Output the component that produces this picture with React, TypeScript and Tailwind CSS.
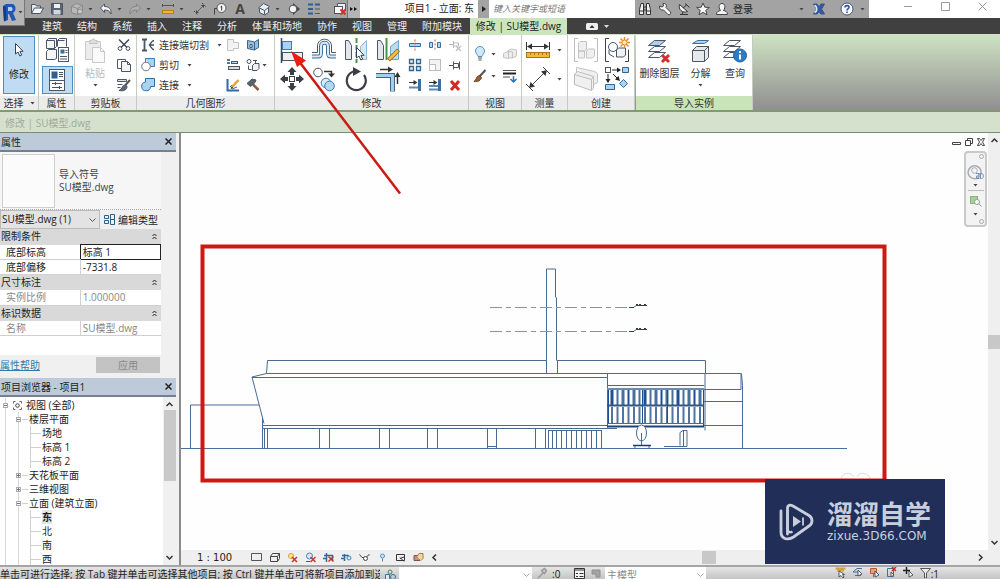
import type { ReactNode } from "react";

type IconProps = {
  w?: number;
  h?: number;
  children: ReactNode;
};

function Icon({ w = 16, h = 16, children }: IconProps) {
  return (
    <svg
      width={w}
      height={h}
      viewBox={`0 0 ${w} ${h}`}
      fill="none"
      stroke="#4b5563"
      className="block shrink-0"
      aria-hidden="true"
    >
      {children}
    </svg>
  );
}

function Caret() {
  return (
    <svg width="5" height="3" viewBox="0 0 5 3" className="block shrink-0" aria-hidden="true">
      <path d="M.5 0h4l-2 2.500z" fill="#444" />
    </svg>
  );
}

/* ---------- Quick access icons ---------- */

const OpenIcon = () => (
  <Icon w={14} h={14}>
    <path d="M1.500 11.500v-9h4l1 1.500h4v2" fill="#e8e8e8" />
    <path d="M1.500 11.500l3-5.500h9l-3 5.500z" fill="#f5f5f5" />
  </Icon>
);

const SaveIcon = () => (
  <Icon w={14} h={14}>
    <path d="M1.500 1.500h11v11h-10l-1-1z" fill="#5b6470" />
    <rect x="4" y="2" width="6" height="4" fill="#f0f0f0" stroke="none" />
    <rect x="3.500" y="8" width="7" height="4.500" fill="#cfd8e2" stroke="none" />
  </Icon>
);

const SyncIcon = () => (
  <Icon w={14} h={14}>
    <path d="M1.500 4.500l5-3 6 2v6l-5 3-6-2z" fill="#b9b9b9" stroke="#8a8a8a" />
    <path d="M1.500 4.500l6 2 5-3M7.500 6.500v6" stroke="#8a8a8a" />
    <circle cx="10" cy="9.500" r="2.500" fill="#c8c8c8" stroke="#8a8a8a" />
  </Icon>
);

function UndoIcon({ redo = false }: { redo?: boolean }) {
  return (
    <Icon w={14} h={14}>
      <path
        d={redo ? "M12.500 6l-4-4v2.500C4 4.500 1.500 7 2 12c1.500-3 3-4 6.500-4v2.500z" : "M1.500 6l4-4v2.500C10 4.500 12.500 7 12 12c-1.500-3-3-4-6.500-4v2.500z"}
        fill={redo ? "#aeaeae" : "#f4f4f4"}
        stroke={redo ? "#858585" : "#4b5563"}
      />
    </Icon>
  );
}

const RulerIcon = () => (
  <Icon w={14} h={14}>
    <path d="M2 3.500h10M1.500 2v3M12.500 2v3" stroke="#555" />
    <rect x="1.500" y="8.500" width="11" height="3" fill="#f2b632" stroke="#b77d10" />
  </Icon>
);

const DimIcon = () => (
  <Icon w={14} h={14}>
    <path d="M3 11l8-8M1 9l4 4M9 1l4 4" stroke="#444" strokeDasharray="2 1" />
    <path d="M3 11v-3l3 3zM11 3v3l-3-3z" fill="#444" stroke="none" />
  </Icon>
);

const TagIcon = () => (
  <Icon w={14} h={14}>
    <path d="M1.500 12.500v-6h4" stroke="#444" />
    <circle cx="8.500" cy="6" r="4.500" fill="#f5f5f5" stroke="#555" />
    <path d="M7.500 5l1.200-1v4.500" stroke="#333" />
  </Icon>
);

const CubeIcon = () => (
  <Icon w={14} h={14}>
    <path d="M1.500 6l5-4.500 6 3-1 1v5l-4 2.500-5-2.500v-4z" fill="#e4ecf4" />
    <path d="M2.500 6l5 2.500 4-3M7.500 8.500v4" />
  </Icon>
);

const SectionIcon = () => (
  <Icon w={14} h={14}>
    <path d="M6 1l7 6-7 6z" fill="#444" stroke="none" />
    <circle cx="6" cy="7" r="3.800" fill="#f2f2f2" />
  </Icon>
);

const ThinLinesIcon = () => (
  <Icon w={14} h={14}>
    <path d="M1 2.500h5M8 2.500h5M1 7h5M1 11.500h5" stroke="#2f5f96" strokeWidth="2" />
    <path d="M8 7h5M8 11.500h5" stroke="#555" />
  </Icon>
);

const CloseHiddenIcon = () => (
  <Icon w={14} h={14}>
    <path d="M4.500 4v-2.500h8v7h-2" fill="#eee" />
    <rect x="1.500" y="4.500" width="8" height="7" fill="#f8f8f8" />
    <path d="M7.500 7.500l5 5M12.500 7.500l-5 5" stroke="#d2312b" strokeWidth="2" />
  </Icon>
);

const BinocularsIcon = () => (
  <Icon w={14} h={14}>
    <path d="M1.500 12.500v-5l1.500-6h2.500v11zM12.500 12.500v-5l-1.500-6H8.500v11z" fill="#f1f1f1" stroke="#333" />
    <path d="M5.500 5h3M5.500 8h3M1.500 9h4M8.500 9h4" stroke="#333" />
  </Icon>
);

const WrenchIcon = () => (
  <Icon w={14} h={14}>
    <path d="M1.500 4L4 5l1.500-1L5 1.500C8 1 9 3.500 8 5.500l4.500 4.500c1 2-1 3.500-2.500 2.500L5.500 8C3 8.500 1 7 1.500 4z" fill="#f3f3f3" stroke="#444" />
  </Icon>
);

const DishIcon = () => (
  <Icon w={14} h={14}>
    <path d="M2.500 2.500c-1.500 5 3 9 8 7z" fill="#f3f3f3" stroke="#333" />
    <path d="M6 6l4-3.500M3 12.500h8M6 10l-1 2.500M8 1.500l4.500 4" stroke="#333" />
  </Icon>
);

const StarIcon = () => (
  <Icon w={14} h={14}>
    <path d="M7 1l1.800 4.200 4.500.3-3.500 2.900 1.200 4.400L7 10.400l-4 2.400 1.200-4.400L.7 5.500l4.500-.3z" fill="#f6f6f6" stroke="#444" />
  </Icon>
);

const PersonIcon = () => (
  <Icon w={14} h={14}>
    <path d="M1.500 12.500c0-3 2-3.500 4-4C3 5 4 1.500 7 1.500s4 3.500 1.500 7c2 .5 4 1 4 4z" fill="#f3f3f3" stroke="#444" />
  </Icon>
);

const ExchangeIcon = () => (
  <Icon w={14} h={14}>
    <path d="M1.500 2h3.500l2 3 2-3h3.500L9.500 7l3 5H9L7 9.500 5 12H1.500l3-5z" fill="#2f5aa8" stroke="#3a5286" />
    <path d="M2.500 3.500c3 1 3 6 0 7" stroke="#dfe8f8" strokeWidth="1.500" />
  </Icon>
);

const HelpIcon = () => (
  <Icon w={14} h={14}>
    <circle cx="7" cy="7" r="6" fill="#f5f8fd" stroke="#46597a" />
    <path d="M5 5.500C5 3 9 3 9 5.300 9 6.800 7 6.800 7 8.500M7 9.500v1.500" stroke="#2455a4" strokeWidth="1.600" />
  </Icon>
);

/* ---------- Ribbon icons ---------- */

function Cursor({ x, y }: { x: number; y: number }) {
  return (
    <path
      transform={`translate(${x} ${y})`}
      d="M.5.5v10.500l2.500-2 1.800 4 1.900-.9-1.800-3.800h3.200z"
      fill="#fff"
      stroke="#374151"
    />
  );
}

const ModifyIcon = () => (
  <Icon w={16} h={18}>
    <Cursor x={4} y={2} />
  </Icon>
);

const TypePropsIcon = () => (
  <Icon w={26} h={26}>
    <path d="M2.500 3.500l2-2h8v8l-2 2h-8zM13.500 3.500l2-2h7v8M2.500 14.500l2-2h8v9l-2 1h-8zM2.500 3.500h8v8M13.500 9.500v-6h7" fill="#f4f5f6" />
    <rect x="14.500" y="10.500" width="10" height="14" fill="#fff" />
    <rect x="16.500" y="12.500" width="4" height="4" fill="#2f6da8" stroke="none" />
    <path d="M16 19.500h7M16 22h7M21.500 13.500h2M21.500 15.500h2" />
  </Icon>
);

const PropsIcon = () => (
  <Icon w={18} h={24}>
    <rect x="1.500" y="1.500" width="15" height="21" fill="#fff" />
    <rect x="3.500" y="3.500" width="6" height="7" fill="#2f5f8f" stroke="none" />
    <path d="M11 4.500h4M11 6.500h4M11 8.500h4M1.500 12.500h15M4 15.500h10M4 19.500h10M7.500 14v3M11.500 18v3" />
  </Icon>
);

const PasteIcon = () => (
  <Icon w={22} h={26}>
    <path d="M1.500 3.500h15v18h-15z" fill="#ececec" stroke="#c9c9c9" />
    <path d="M5.500 5.500v-3h2l1-1.500h1.500l1 1.500h2v3z" fill="#ddd" stroke="#c4c4c4" />
    <path d="M8.500 9.500h8l4 4v11h-12z" fill="#fafafa" stroke="#c9c9c9" />
    <path d="M16.500 9.500v4h4" stroke="#c9c9c9" />
  </Icon>
);

const CutIcon = () => (
  <Icon w={14} h={14}>
    <path d="M2 1.500l8 8M12 1.500l-8 8" stroke="#3f4650" strokeWidth="1.500" />
    <circle cx="3" cy="10.500" r="1.900" />
    <circle cx="11" cy="10.500" r="1.900" />
  </Icon>
);

const CopyIcon = () => (
  <Icon w={14} h={14}>
    <path d="M.5 1.500h8v9h-8z" fill="#fff" />
    <path d="M4.500 3.500h6l3 3v7h-9z" fill="#f3f4f5" />
    <path d="M10.500 3.500v3h3" />
  </Icon>
);

const MatchIcon = () => (
  <Icon w={14} h={14}>
    <path d="M.5 1.500h9v2h-9zM.5 6.500h5M.5 9.500h3" fill="#dfe5ea" />
    <path d="M13 2L8 7.500" stroke="#555" strokeWidth="2" />
    <path d="M8.500 7c-4 0-2.500 4-6.500 5.500 4.500 1 8-.5 8-4z" fill="#5d6673" />
  </Icon>
);

const CopeIcon = () => (
  <Icon w={14} h={14}>
    <path d="M1 1.500h5M1 12.500h5M3.500 1.500v11" strokeWidth="1.800" />
    <path d="M13 2.500c-2 0-2.500 2-4.500 4.500 2 2.500 2.500 4.500 4.500 4.500M8.500 7H13" stroke="#3f4d5c" strokeWidth="1.300" />
  </Icon>
);

const CutGeomIcon = () => (
  <Icon w={14} h={14}>
    <path d="M4.500.5h9v8h-4" fill="#a9d3f1" stroke="#3b7db4" />
    <circle cx="5" cy="8.500" r="4.300" fill="#fff" stroke="#6b7280" />
    <path d="M4.500 4V.5" stroke="#3b7db4" />
  </Icon>
);

const JoinIcon = () => (
  <Icon w={14} h={14}>
    <path d="M4.500.5h9v8h-4a4.400 4.400 0 1 1-5-4.500z" fill="#a9d3f1" stroke="#2f6f9f" />
  </Icon>
);

const CutProfileIcon = () => (
  <Icon w={14} h={14}>
    <path d="M1.500 1.500h6v3h5v6h-5v2h-6z" fill="#f3f3f3" stroke="#c2c2c2" />
  </Icon>
);

const BeamIcon = () => (
  <Icon w={14} h={14}>
    <path d="M1 2h3M1 5h3" stroke="#3b7db4" strokeWidth="2" />
    <rect x="5.500" y="3.500" width="6" height="2" fill="#b9d9ef" />
    <rect x="2.500" y="8.500" width="11" height="3" fill="#d5dade" />
  </Icon>
);

const PencilIcon = () => (
  <Icon w={14} h={14}>
    <path d="M1.500 1v11.500H13" stroke="#2f6da8" strokeWidth="2" />
    <path d="M4 9l2-2M6 11l5-2" stroke="#2f6da8" />
    <path d="M6 9l6.500-7" stroke="#e3a52a" strokeWidth="2.500" />
    <path d="M5 10.500l1.500-1.500" stroke="#333" strokeWidth="1.500" />
  </Icon>
);

const WallFaceIcon = () => (
  <Icon w={14} h={14}>
    <path d="M1.500 2.500l7 1.500v8l-7-1.500zM8.500 4l4-2.500v8L8.500 12z" fill="#8fc2e8" stroke="#41617f" />
    <path d="M4 6.500h2v3H4z" fill="#fff" />
  </Icon>
);

const SplitFaceIcon = () => (
  <Icon w={14} h={14}>
    <circle cx="3" cy="3.500" r="2" />
    <path d="M7 2.500h4M2.500 7.500v4h3M9.500 2.500v2.500" />
    <path d="M6.500 7.500l2-2h4.500v5l-2 2h-4.500z" fill="#eef1f3" />
  </Icon>
);

const HammerIcon = () => (
  <Icon w={14} h={14}>
    <path d="M7 6.500l5.500 5.500" stroke="#8d5a3a" strokeWidth="2.500" />
    <path d="M1 5.500l5-4.500 4 1-1 2.500L4.500 8.500z" fill="#59616c" />
  </Icon>
);

const AlignIcon = () => (
  <Icon w={26} h={26}>
    <path d="M2.500 1v25" stroke="#2f4c6a" strokeWidth="1.500" />
    <rect x="3.500" y="4.500" width="9" height="8" fill="#a9d3f1" stroke="#3b7db4" />
    <rect x="3.500" y="15.500" width="20" height="8" fill="#eceef0" />
  </Icon>
);

const OffsetIcon = () => (
  <Icon w={26} h={26}>
    <path
      d="M1 19.500h6.500c2.500 0 2.500-1.500 2.500-4V9c0-4.500 7-4.500 7 0v6.500c0 2.500 0 4 2.500 4H25"
      stroke="#3f6f9a"
      strokeWidth="4"
    />
    <path
      d="M1 19.500h6.500c2.500 0 2.500-1.500 2.500-4V9c0-4.500 7-4.500 7 0v6.500c0 2.500 0 4 2.500 4H25"
      stroke="#d6eaf8"
      strokeWidth="2"
    />
    <path d="M1 15.500h5.500V9c0-9 14-9 14 0v6.500H25" stroke="#4b5563" />
  </Icon>
);

const MirrorPickIcon = () => (
  <Icon w={26} h={26}>
    <path d="M2.500 3.500l3 0 3 5v14h-6z" fill="#e4e7ea" />
    <path d="M13.500 1v25" stroke="#46954a" strokeWidth="2" strokeDasharray="5 2" />
    <path d="M23.500 3.500l-6 6v13h6z" fill="#d4e8f5" stroke="#8db7d4" />
    <Cursor x={13} y={10} />
  </Icon>
);

const MirrorDrawIcon = () => (
  <Icon w={26} h={26}>
    <path d="M2.500 3.500l3 0 3 5v14h-6z" fill="#e4e7ea" />
    <path d="M11.500 1v22" stroke="#46954a" strokeWidth="2" />
    <path d="M23.500 3.500l-8 6v13h8z" fill="#b9dbf2" stroke="#6ca5cf" />
    <path d="M13.500 23l10-10" stroke="#8b6516" strokeWidth="4" />
    <path d="M14 22.500l9-9" stroke="#f4bf3c" strokeWidth="2.500" />
  </Icon>
);

const MoveIcon = () => (
  <Icon w={26} h={26}>
    <rect x="10.500" y="10.500" width="5" height="5" stroke="#3a3f46" />
    <path
      d="M13 1l4.500 5H15v3h-4V6H8.500zM13 25l-4.500-5H11v-3h4v3h2.500zM1 13l5-4.500V11h3v4H6v2.500zM25 13l-5 4.500V15h-3v-4h3V8.500z"
      fill="#3a3f46"
      stroke="none"
    />
  </Icon>
);

const CopyElementIcon = () => (
  <Icon w={26} h={26}>
    <circle cx="7" cy="6.500" r="4.300" fill="#fff" />
    <path d="M13 5.500h7.500v3" stroke="#333" strokeWidth="1.500" />
    <path d="M17 7.500h7l-3.500 4z" fill="#333" stroke="none" />
    <circle cx="15" cy="17" r="4.800" fill="#d8ebf8" stroke="#3b7db4" />
    <circle cx="18.500" cy="20" r="4.800" fill="#b3d7f1" stroke="#3b7db4" />
  </Icon>
);

const RotateIcon = () => (
  <Icon w={26} h={26}>
    <path d="M15 5.200A9.500 9.500 0 1 0 21 9" stroke="#3a3f46" strokeWidth="2.200" />
    <path d="M10 1l8 4.500-8 4.500z" fill="#3a3f46" stroke="none" />
  </Icon>
);

const TrimIcon = () => (
  <Icon w={26} h={26}>
    <path d="M5 3.500h9M22.500 18v-8" stroke="#333" strokeWidth="1.500" />
    <path d="M13 .5l5 3-5 3zM19.500 11l3-5 3 5z" fill="#333" stroke="none" />
    <path d="M1 9.500h16.500v16" stroke="#3f6486" strokeWidth="5" />
    <path d="M1 9.500h16.500v16" stroke="#a5cfee" strokeWidth="3" />
  </Icon>
);

function SplitIcon({ gap = false }: { gap?: boolean }) {
  return (
    <Icon w={14} h={14}>
      <path
        d={gap ? "M1.500 4.500h3v5h-3zM9.500 4.500h3v5h-3z" : "M1.500 5.500h11v3h-11z"}
        fill="#b3d7f1"
        stroke="#3b6f9c"
      />
      <path d="M7 1.500v11" stroke="#d35b50" strokeDasharray={gap ? "2 2" : "2 1"} />
    </Icon>
  );
}

const UnpinIcon = () => (
  <Icon w={14} h={14}>
    <path d="M1 6.500h4M5.500 3v7M5.500 5h5v3h-5" stroke="#bbb" />
    <path d="M8 8l5 5M13 8l-5 5" stroke="#c3c3c3" strokeWidth="1.500" />
  </Icon>
);

const ArrayIcon = () => (
  <Icon w={14} h={14}>
    <path d="M1.500 1.500h4v4h-4zM8.500 1.500h4v4h-4zM1.500 8.500h4v4h-4zM8.500 8.500h4v4h-4z" fill="#d9ecf9" stroke="#2f6591" strokeWidth="1.300" />
  </Icon>
);

const ScaleIcon = () => (
  <Icon w={14} h={14}>
    <rect x="1.500" y="1.500" width="11" height="11" fill="#f3f3f3" stroke="#bcbcbc" />
    <rect x="1.500" y="6.500" width="6" height="6" fill="#fff" stroke="#bcbcbc" />
  </Icon>
);

const PinIcon = () => (
  <Icon w={14} h={14}>
    <path d="M1 7.500h4M5.500 3.500v8M5.500 5.500h5v4h-5M11.500 3.500v8" />
  </Icon>
);

function TrimSingleIcon({ multi = false }: { multi?: boolean }) {
  return (
    <Icon w={14} h={14}>
      <path d="M11.500 1v12" stroke="#3b6f9c" strokeWidth="3" />
      <path d={multi ? "M1 8h9M1 11.500h9" : "M1 9.500h9"} stroke="#5c8cb5" strokeWidth="2" />
      <path d="M1 4.500h6" stroke="#333" />
      <path d="M5.500 2l4 2.500-4 2.500z" fill="#333" stroke="none" />
    </Icon>
  );
}

const DeleteIcon = () => (
  <Icon w={14} h={14}>
    <path d="M3 3l8 9M11 3l-8 9" stroke="#cf2a22" strokeWidth="3" />
  </Icon>
);

const BulbIcon = () => (
  <Icon w={14} h={16}>
    <path d="M5 10.500C5 8.500 2.500 8 2.500 5a4.500 4.500 0 0 1 9 0c0 3-2.500 3.500-2.500 5.500z" fill="#cfe8fa" stroke="#5d92bb" />
    <path d="M5 12h4M5.500 14h3" />
  </Icon>
);

const HideBoxIcon = () => (
  <Icon w={16} h={16}>
    <path d="M1.500 7.500l5-2v7l-5-1zM5.500 5l4-2 5 1v6l-4 2h-4M5.500 5l5 1v6" fill="#ededed" stroke="#c3c3c3" />
  </Icon>
);

const BrushIcon = () => (
  <Icon w={14} h={16}>
    <path d="M12.500 2L6.500 8.500" stroke="#50545a" strokeWidth="2" />
    <path d="M6.500 7.500c-4 1-2.500 4-5.500 6 4 .5 7-1 7.500-4z" fill="#9a5f33" stroke="#6d3f1d" />
  </Icon>
);

const LineWorkIcon = () => (
  <Icon w={16} h={16}>
    <path d="M1 2.500h13M1 9h7" stroke="#555" />
    <path d="M1 5.500h13" stroke="#222" strokeWidth="2" />
    <path d="M11.500 8v6M8.500 11l3 3 3-3" stroke="#2c72b0" strokeWidth="1.500" />
  </Icon>
);

const MeasureIcon = () => (
  <Icon w={26} h={26}>
    <path d="M1.500 5v8M24.500 5v8M3 9.500h20" stroke="#333" />
    <path d="M2 9.500l5-3v6zM24 9.500l-5-3v6z" fill="#333" stroke="none" />
    <rect x="1.500" y="15.500" width="23" height="5" fill="#f0b93a" stroke="#a8771a" />
    <path d="M5.500 16v2M9.500 16v2M13.500 16v2M17.500 16v2M21.500 16v2" stroke="#a8771a" />
  </Icon>
);

const AlignedDimIcon = () => (
  <Icon w={26} h={26}>
    <path d="M4 22L22 4M1 18l7 7M18 1l7 7" stroke="#444" />
    <path d="M4 22l1.500-6 4.500 4.500zM22 4l-1.500 6L16 5.500z" fill="#333" stroke="none" />
  </Icon>
);

const AssemblyIcon = () => (
  <Icon w={26} h={26}>
    <path d="M5 1.500H1.500v23H5M21 1.500h3.500v23H21" stroke="#bdbdbd" />
    <path d="M5.500 6l2-1.500h6v8l-2 1.500h-6zM5.500 14h6v7h-6zM13.500 14l2-2h6v7l-2 2h-6z" fill="#efefef" stroke="#c3c3c3" />
  </Icon>
);

const CreateGroupIcon = () => (
  <Icon w={26} h={26}>
    <path d="M5 1.500H1.500v23H5M21 24.500h3.500v-12" stroke="#444" />
    <circle cx="9" cy="10" r="4.500" fill="#fff" />
    <path d="M12.500 13l2-2h7v7l-2 2h-7z" fill="#eef2f5" />
    <path d="M5 13v4l5 3" />
    <path d="M20.500 0v11M15 5.500h11M16.500 1.500l8 8M24.500 1.500l-8 8" stroke="#e58b2a" strokeWidth="1.500" />
    <circle cx="20.500" cy="5.500" r="2.500" fill="#fff1cf" stroke="#e58b2a" />
  </Icon>
);

const PartsIcon = () => (
  <Icon w={26} h={26}>
    <path d="M3.500 1.500l18 4 3 2v9l-4 2M3.500 1.500v5" fill="#efefef" stroke="#c3c3c3" />
    <path d="M1.500 8.500l3-3 16 5v12l-2 2-17-6z" fill="#f0f0f0" stroke="#bdbdbd" />
    <path d="M1.500 8.500l17 5v11M18.500 13.500l2-3" stroke="#bdbdbd" />
  </Icon>
);

const SimilarIcon = () => (
  <Icon w={26} h={26}>
    <rect x="1.500" y="1.500" width="5" height="5" />
    <path d="M8 4h8M4 8v8M9 8l6 6" stroke="#222" />
    <path d="M13 1.500l4 2.500-4 2.500zM1.500 13h5L4 17zM16 15l-5-1.500 3.500-3.500z" fill="#222" stroke="none" />
    <path d="M18.500 1.500h6v5h-6zM1.500 18.500h9v5h-9zM19.500 13.500l4 4-4 4-4-4z" fill="#a9d3f1" stroke="#2f6591" />
  </Icon>
);

function LayerStack({ top }: { top: string }) {
  return (
    <>
      <path d="M1.500 19.500l6-5h11l-6 5z" fill="#fff" />
      <path d="M1.500 13.500l6-5h11l-6 5z" fill="#fff" />
      <path d="M1.500 7.500l6-5h11l-6 5z" fill={top} />
    </>
  );
}

const DeleteLayersIcon = () => (
  <Icon w={26} h={26}>
    <LayerStack top="#a9d3f1" />
    <path d="M15 17l7 7M22 17l-7 7" stroke="#d2312b" strokeWidth="3" />
  </Icon>
);

const ExplodeIcon = () => (
  <Icon w={22} h={26}>
    <path d="M2.500 5.500l5-3h11l-4 3z" fill="#a9d3f1" stroke="#3b6f9c" />
    <path d="M2.500 12.500l4-4h12v11l-4 4h-12z" fill="#e6e9ec" />
    <path d="M2.500 12.500h12v11M14.500 12.500l4-4" />
  </Icon>
);

const QueryIcon = () => (
  <Icon w={26} h={26}>
    <LayerStack top="#fff" />
    <circle cx="18" cy="17.500" r="6.500" fill="#2c7bc4" stroke="#1f5f9c" />
    <path d="M18 16.500v5M18 13v2" stroke="#fff" strokeWidth="2" />
  </Icon>
);

/* ---------- Title bar ---------- */

type ToolButtonProps = {
  label: string;
  className?: string;
  children: ReactNode;
};

function ToolButton({ label, className = "", children }: ToolButtonProps) {
  return (
    <button
      type="button"
      aria-label={label}
      className={`flex shrink-0 items-center justify-center ${className}`}
    >
      {children}
    </button>
  );
}

function TitleBar() {
  return (
    <header className="flex h-[18px] shrink-0 items-stretch bg-white">
      <div className="flex w-[348px] shrink-0 items-center border-r border-[#777] bg-[#a3a3a3] pl-[27px]">
        <ToolButton label="打开" className="w-5"><OpenIcon /></ToolButton>
        <ToolButton label="保存" className="w-5"><SaveIcon /></ToolButton>
        <ToolButton label="同步" className="w-[29px] gap-1"><SyncIcon /><Caret /></ToolButton>
        <ToolButton label="放弃" className="w-[29px] gap-1"><UndoIcon /><Caret /></ToolButton>
        <ToolButton label="重做" className="w-[29px] gap-1"><UndoIcon redo /><Caret /></ToolButton>
        <ToolButton label="测量" className="w-9 gap-1"><RulerIcon /><Caret /></ToolButton>
        <ToolButton label="对齐尺寸标注" className="w-5"><DimIcon /></ToolButton>
        <ToolButton label="按类别标记" className="w-5"><TagIcon /></ToolButton>
        <button type="button" className="w-5 shrink-0 text-[14px] leading-[18px] font-bold text-[#444]">A</button>
        <ToolButton label="三维视图" className="w-9 gap-1"><CubeIcon /><Caret /></ToolButton>
        <ToolButton label="剖面" className="w-4"><SectionIcon /></ToolButton>
        <ToolButton label="细线" className="w-6"><ThinLinesIcon /></ToolButton>
        <ToolButton label="关闭隐藏窗口" className="w-7"><CloseHiddenIcon /></ToolButton>
      </div>
      <ToolButton label="更多" className="w-3 bg-[#b4b4b4]">
        <svg width="8" height="6" viewBox="0 0 8 6" aria-hidden="true">
          <path d="M0 1l3 2-3 2zM4 1l3 2-3 2z" fill="#111" />
        </svg>
      </ToolButton>
      <h1 className="w-[118px] shrink-0 pr-1 text-right text-[10px] leading-4 whitespace-nowrap text-[#222]">
        项目1 - 立面: 东
      </h1>
      <ToolButton label="展开搜索" className="w-[11px] bg-[#a3a3a3]">
        <svg width="4" height="6" viewBox="0 0 4 6" aria-hidden="true">
          <path d="M0 0l4 3-4 3z" fill="#222" />
        </svg>
      </ToolButton>
      <input
        type="text"
        aria-label="搜索"
        placeholder="键入关键字或短语"
        className="w-[146px] shrink-0 bg-white px-1 text-[9px] leading-4 italic placeholder:text-[#777]"
      />
      <div className="flex w-[234px] shrink-0 items-center bg-[#a3a3a3] pr-1">
        <ToolButton label="查找" className="w-5"><BinocularsIcon /></ToolButton>
        <ToolButton label="速博" className="w-5"><WrenchIcon /></ToolButton>
        <ToolButton label="通讯中心" className="w-[18px]"><DishIcon /></ToolButton>
        <ToolButton label="收藏夹" className="w-5"><StarIcon /></ToolButton>
        <button type="button" className="flex items-center gap-1 pl-0.5 text-[10px] leading-4 text-[#222]">
          <PersonIcon />
          登录
        </button>
        <div className="flex-1" />
        <ToolButton label="Exchange Apps" className="gap-2"><Caret /><ExchangeIcon /></ToolButton>
        <ToolButton label="帮助" className="ml-3.5 gap-1.5"><HelpIcon /><Caret /></ToolButton>
      </div>
      <div className="flex flex-1 items-center justify-between pr-3 pb-[5px] pl-[33px]">
        <ToolButton label="最小化">
          <Icon w={11} h={11}><path d="M2 5.500h8" stroke="#999" /></Icon>
        </ToolButton>
        <ToolButton label="最大化">
          <Icon w={11} h={11}><path d="M1.500 1.500h8v8h-8z" stroke="#999" /></Icon>
        </ToolButton>
        <ToolButton label="关闭">
          <Icon w={11} h={11}><path d="M1.500 1.500l8 8M9.500 1.500l-8 8" stroke="#999" /></Icon>
        </ToolButton>
      </div>
    </header>
  );
}

const tabs = ["建筑", "结构", "系统", "插入", "注释", "分析", "体量和场地", "协作", "视图", "管理", "附加模块"];

function TabBar() {
  return (
    <nav className="flex h-4 shrink-0 gap-px bg-[#404040] pl-[35px] text-[10px] leading-[17px]">
      {tabs.map((tab) => (
        <button key={tab} type="button" className="shrink-0 px-[7px] text-[#eee]">
          {tab}
        </button>
      ))}
      <button
        type="button"
        className="w-[97px] shrink-0 bg-[#cbe6bd] text-center whitespace-nowrap text-[#222]"
      >
        修改 | SU模型.dwg
      </button>
      <button type="button" aria-label="显示功能区" className="ml-[18px] flex items-center gap-1.5">
        <svg width="12" height="7" viewBox="0 0 12 7" aria-hidden="true">
          <rect width="12" height="7" rx="1.500" fill="#eee" />
          <path d="M3.500 5h5L6 2z" fill="#333" />
        </svg>
        <svg width="5" height="3" viewBox="0 0 5 3" aria-hidden="true">
          <path d="M0 0h5L2.500 3z" fill="#ddd" />
        </svg>
      </button>
    </nav>
  );
}

/* ---------- Ribbon ---------- */

type PanelProps = {
  title: ReactNode;
  className: string;
  contextual?: boolean;
  children: ReactNode;
};

function Panel({ title, className, contextual = false, children }: PanelProps) {
  return (
    <section className={`flex shrink-0 flex-col border-r border-[#c5cbc2] bg-white ${className}`}>
      <div className="flex min-h-0 flex-1 items-start">{children}</div>
      <h2
        className={`flex h-[14px] shrink-0 items-center justify-center gap-1.5 text-[10px] leading-[14px] whitespace-nowrap text-[#333] ${
          contextual ? "bg-[#c9e4b8]" : "bg-[#ececec]"
        }`}
      >
        {title}
      </h2>
    </section>
  );
}

type LargeButtonProps = {
  icon: ReactNode;
  label: string;
  className: string;
  caret?: boolean;
};

function LargeButton({ icon, label, className, caret = false }: LargeButtonProps) {
  return (
    <button type="button" className={`flex shrink-0 flex-col items-center pt-px text-[10px] leading-[14px] whitespace-nowrap ${className}`}>
      <span className="flex h-[30px] items-center">{icon}</span>
      {label}
      {caret && <span className="pt-1"><Caret /></span>}
    </button>
  );
}

function GeometryButton({ icon, label }: { icon: ReactNode; label: string }) {
  return (
    <button type="button" className="flex h-5 items-center gap-1 text-[10px] leading-4 whitespace-nowrap text-[#333]">
      {icon}
      {label}
      <span className="pl-1"><Caret /></span>
    </button>
  );
}

function Ribbon() {
  return (
    <div className="flex h-[78px] shrink-0 border-b-2 border-[#7f9b6f] bg-linear-to-b from-[#cfe4c3] to-[#918f90] pt-px">
      <Panel title={<>选择 <Caret /></>} className="w-[39px]">
        <button
          type="button"
          className="mt-px ml-[3px] flex h-[58px] w-8 flex-col items-center border border-[#4b8fc6] bg-[#bfdcf3] pt-1 text-[10px] leading-[14px] text-[#222]"
        >
          <span className="flex h-6 items-start"><ModifyIcon /></span>
          <span className="pt-0.5">修改</span>
        </button>
      </Panel>

      <Panel title="属性" className="w-9">
        <div className="flex flex-col items-center gap-[3px] pt-0.5 pl-0.5">
          <ToolButton label="类型属性" className="h-[26px] w-8"><TypePropsIcon /></ToolButton>
          <ToolButton label="属性" className="h-7 w-[31px] border border-[#4b8fc6] bg-[#bfdcf3]"><PropsIcon /></ToolButton>
        </div>
      </Panel>

      <Panel title="剪贴板" className="w-[62px]">
        <LargeButton icon={<PasteIcon />} label="粘贴" caret className="w-10 text-[#b9b9b9]" />
        <div className="flex flex-col">
          <ToolButton label="剪切到剪贴板" className="h-5 w-[18px]"><CutIcon /></ToolButton>
          <ToolButton label="复制到剪贴板" className="h-5 w-[18px]"><CopyIcon /></ToolButton>
          <ToolButton label="匹配类型" className="h-5 w-[18px]"><MatchIcon /></ToolButton>
        </div>
      </Panel>

      <Panel title="几何图形" className="w-[138px]">
        <div className="flex w-[86px] shrink-0 flex-col pl-1">
          <GeometryButton icon={<CopeIcon />} label="连接端切割" />
          <GeometryButton icon={<CutGeomIcon />} label="剪切" />
          <GeometryButton icon={<JoinIcon />} label="连接" />
        </div>
        <div className="flex flex-col">
          <ToolButton label="墙连接" className="h-5 w-5"><CutProfileIcon /></ToolButton>
          <ToolButton label="梁柱连接" className="h-5 w-5"><BeamIcon /></ToolButton>
          <ToolButton label="拆分面" className="h-5 w-5"><PencilIcon /></ToolButton>
        </div>
        <div className="flex flex-col items-start">
          <ToolButton label="填色" className="h-5 w-5"><WallFaceIcon /></ToolButton>
          <ToolButton label="连接屋顶" className="h-5 gap-0.5 pl-[3px]"><SplitFaceIcon /><Caret /></ToolButton>
          <ToolButton label="拆除" className="h-5 w-5"><HammerIcon /></ToolButton>
        </div>
      </Panel>

      <Panel title="修改" className="w-[194px]">
        <div className="grid grid-cols-4 gap-y-[3px] pt-0.5 pl-px">
          <ToolButton label="对齐" className="h-[26px] w-8"><AlignIcon /></ToolButton>
          <ToolButton label="偏移" className="h-[26px] w-8"><OffsetIcon /></ToolButton>
          <ToolButton label="镜像 - 拾取轴" className="h-[26px] w-8"><MirrorPickIcon /></ToolButton>
          <ToolButton label="镜像 - 绘制轴" className="h-[26px] w-8"><MirrorDrawIcon /></ToolButton>
          <ToolButton label="移动" className="h-[26px] w-8"><MoveIcon /></ToolButton>
          <ToolButton label="复制" className="h-[26px] w-8"><CopyElementIcon /></ToolButton>
          <ToolButton label="旋转" className="h-[26px] w-8"><RotateIcon /></ToolButton>
          <ToolButton label="修剪/延伸为角" className="h-[26px] w-8"><TrimIcon /></ToolButton>
        </div>
        <div className="grid grid-cols-3 pl-px">
          <ToolButton label="拆分图元" className="h-5 w-5"><SplitIcon /></ToolButton>
          <ToolButton label="用间隙拆分" className="h-5 w-5"><SplitIcon gap /></ToolButton>
          <ToolButton label="解锁" className="h-5 w-5"><UnpinIcon /></ToolButton>
          <ToolButton label="阵列" className="h-5 w-5"><ArrayIcon /></ToolButton>
          <ToolButton label="缩放" className="h-5 w-5"><ScaleIcon /></ToolButton>
          <ToolButton label="锁定" className="h-5 w-5"><PinIcon /></ToolButton>
          <ToolButton label="修剪/延伸单个图元" className="h-5 w-5"><TrimSingleIcon /></ToolButton>
          <ToolButton label="修剪/延伸多个图元" className="h-5 w-5"><TrimSingleIcon multi /></ToolButton>
          <ToolButton label="删除" className="h-5 w-5"><DeleteIcon /></ToolButton>
        </div>
      </Panel>

      <Panel title="视图" className="w-[53px]">
        <div className="grid grid-cols-2 gap-x-1 gap-y-1 pt-[10px] pl-1">
          <ToolButton label="在视图中隐藏" className="h-[18px] gap-1"><BulbIcon /><Caret /></ToolButton>
          <ToolButton label="置换图元" className="h-[18px]"><HideBoxIcon /></ToolButton>
          <ToolButton label="替换视图中的图形" className="h-[18px] gap-1"><BrushIcon /><Caret /></ToolButton>
          <ToolButton label="线处理" className="h-[18px]"><LineWorkIcon /></ToolButton>
        </div>
      </Panel>

      <Panel title="测量" className="w-[46px]">
        <div className="flex flex-col gap-[3px] pt-0.5 pl-[3px]">
          <ToolButton label="测量两个参照之间的距离" className="h-[26px] gap-1.5"><MeasureIcon /><Caret /></ToolButton>
          <ToolButton label="对齐标注" className="h-[26px] gap-1.5"><AlignedDimIcon /><Caret /></ToolButton>
        </div>
      </Panel>

      <Panel title="创建" className="mr-px w-[67px]">
        <div className="grid grid-cols-2 gap-y-[3px] pt-0.5 pl-0.5">
          <ToolButton label="创建部件" className="h-[26px] w-[31px]"><AssemblyIcon /></ToolButton>
          <ToolButton label="创建组" className="h-[26px] w-[31px]"><CreateGroupIcon /></ToolButton>
          <ToolButton label="创建零件" className="h-[26px] w-[31px]"><PartsIcon /></ToolButton>
          <ToolButton label="创建类似实例" className="h-[26px] w-[31px]"><SimilarIcon /></ToolButton>
        </div>
      </Panel>

      <Panel title="导入实例" contextual className="w-[117px]">
        <LargeButton icon={<DeleteLayersIcon />} label="删除图层" className="w-[47px] text-[#333]" />
        <LargeButton icon={<ExplodeIcon />} label="分解" caret className="w-[35px] text-[#333]" />
        <LargeButton icon={<QueryIcon />} label="查询" className="w-[34px] text-[#333]" />
      </Panel>
    </div>
  );
}

/* ---------- Left docked palettes ---------- */

function PaletteHeader({ title }: { title: string }) {
  return (
    <div className="flex h-[19px] shrink-0 items-center justify-between border-b-2 border-[#75808c] bg-[#bccad9] pr-[3px] pl-px text-[10px] leading-4 text-[#222]">
      <h2>{title}</h2>
      <button type="button" aria-label="关闭" className="p-px">
        <svg width="7" height="7" viewBox="0 0 7 7" className="block" aria-hidden="true">
          <path d="M.5.500l6 6M6.500.5l-6 6" stroke="#222" strokeWidth="1.500" />
        </svg>
      </button>
    </div>
  );
}

type Property = { name: string; value: string; readOnly?: boolean; active?: boolean };

const propertyGroups: { title: string; rows: Property[] }[] = [
  {
    title: "限制条件",
    rows: [
      { name: "底部标高", value: "标高 1", active: true },
      { name: "底部偏移", value: "-7331.8" },
    ],
  },
  { title: "尺寸标注", rows: [{ name: "实例比例", value: "1.000000", readOnly: true }] },
  { title: "标识数据", rows: [{ name: "名称", value: "SU模型.dwg", readOnly: true }] },
];

function PropertiesPalette() {
  return (
    <section className="flex shrink-0 flex-col">
      <PaletteHeader title="属性" />
      <div className="mr-[15px] flex h-[58px] shrink-0 items-center gap-1 border-b border-dotted border-[#aaa] bg-[#f6f6f6] pl-0.5">
        <div className="h-[54px] w-[53px] shrink-0 border border-[#cfcfcf] bg-[#fbfbfb]" />
        <p className="text-[10px] leading-[13px] text-[#444]">
          导入符号
          <br />
          SU模型.dwg
        </p>
      </div>
      <div className="mr-[15px] flex h-[19px] shrink-0 items-center gap-1">
        <div className="relative w-[100px] shrink-0">
          <select
            aria-label="类型选择器"
            className="block h-[19px] w-full appearance-none border border-[#bbb] bg-[#e3e3e3] pl-px text-[10px] leading-[17px] text-[#222]"
          >
            <option>SU模型.dwg (1)</option>
          </select>
          <svg width="7" height="4" viewBox="0 0 7 4" className="pointer-events-none absolute top-2 right-1" aria-hidden="true">
            <path d="M.5.500l3 3 3-3" fill="none" stroke="#555" />
          </svg>
        </div>
        <button type="button" className="flex items-center gap-[3px] text-[10px] leading-4 whitespace-nowrap text-[#222]">
          <Icon w={11} h={11}>
            <path d="M.5 1.500h4v3h-4zM.5 6.500h4v3h-4zM6.500.5h4v10h-4zM6.500 5.500h4" stroke="#2f5f86" />
          </Icon>
          编辑类型
        </button>
      </div>
      <div className="mr-[15px] h-[126px] shrink-0 bg-white">
        <table className="w-full table-fixed border-collapse text-[10px] text-[#222]">
          {propertyGroups.map((group) => (
            <tbody key={group.title}>
              <tr className="h-[15px] bg-[#d9d9d9]">
                <th colSpan={2} scope="colgroup" className="p-0 text-left font-normal">
                  <span className="flex h-[15px] items-center justify-between pr-1 pl-px leading-[15px]">
                    {group.title}
                    <svg width="5" height="7" viewBox="0 0 5 7" aria-hidden="true">
                      <path d="M.5 3l2-2 2 2M.5 6l2-2 2 2" fill="none" stroke="#222" />
                    </svg>
                  </span>
                </th>
              </tr>
              {group.rows.map((row) => (
                <tr key={row.name} className={`h-[15px] ${row.readOnly ? "text-[#888]" : ""}`}>
                  <th scope="row" className="border-b border-[#d0d0d0] p-0 pl-1.5 text-left leading-[14px] font-normal">
                    {row.name}
                  </th>
                  <td
                    className={`p-0 pl-0.5 leading-[14px] ${
                      row.active ? "border border-[#222]" : "border-b border-l border-[#d0d0d0]"
                    }`}
                  >
                    {row.value}
                  </td>
                </tr>
              ))}
            </tbody>
          ))}
        </table>
      </div>
      <div className="mr-[15px] flex h-[19px] shrink-0 items-center justify-between pr-px">
        <a href="#help" className="text-[10px] leading-4 text-[#2a7da8] underline">
          属性帮助
        </a>
        <button type="button" disabled className="h-4 w-16 bg-[#c3c3c3] text-[10px] leading-4 text-[#888]">
          应用
        </button>
      </div>
    </section>
  );
}

type TreeItem = { label: string; level: number; state?: "open" | "closed"; selected?: boolean };

const treeItems: TreeItem[] = [
  { label: "视图 (全部)", level: 0, state: "open" },
  { label: "楼层平面", level: 1, state: "open" },
  { label: "场地", level: 2 },
  { label: "标高 1", level: 2 },
  { label: "标高 2", level: 2 },
  { label: "天花板平面", level: 1, state: "closed" },
  { label: "三维视图", level: 1, state: "closed" },
  { label: "立面 (建筑立面)", level: 1, state: "open" },
  { label: "东", level: 2, selected: true },
  { label: "北", level: 2 },
  { label: "南", level: 2 },
  { label: "西", level: 2 },
];

function Expander({ state }: { state: "open" | "closed" }) {
  return (
    <svg width="7" height="14" viewBox="0 0 7 14" className="block shrink-0" aria-hidden="true">
      <path d="M3.500 0v14" stroke="#d8d8d8" />
      <rect x="1.500" y="5.500" width="4" height="4" fill="#fff" stroke="#aaa" />
      <path d={state === "open" ? "M2 7.500h3" : "M2 7.500h3M3.500 6v3"} stroke="#777" />
    </svg>
  );
}

function TreeRow({ item }: { item: TreeItem }) {
  return (
    <li className="flex h-[14px] items-center text-[10px] leading-[14px] whitespace-nowrap text-[#222]">
      {item.level > 0 && <span className="ml-[5px] h-full w-[10px] shrink-0 border-l border-[#d8d8d8]" />}
      {item.level === 0 && (
        <span className="flex items-center gap-1 pr-1 pl-0.5">
          <Expander state="open" />
          <Icon w={9} h={9}>
            <path d="M.5 2.500v-2h2M6.500.500h2v2M.5 6.500v2h2M6.500 8.500h2v-2" stroke="#666" />
            <circle cx="4.500" cy="4.500" r="1.800" stroke="#444" />
          </Icon>
        </span>
      )}
      {item.level === 1 && item.state && (
        <>
          <Expander state={item.state} />
          <span className="mr-px h-px w-1.5 shrink-0 bg-[#d0d0d0]" />
        </>
      )}
      {item.level === 2 && (
        <>
          <span className="ml-[3px] h-full w-3 shrink-0 border-l border-[#d8d8d8]" />
          <span className="flex h-full w-[12px] shrink-0 items-center border-l border-[#d0d0d0]">
            <span className="h-px w-2.5 bg-[#d0d0d0]" />
          </span>
        </>
      )}
      <span className={item.selected ? "bg-[#e6e6e6] font-bold" : ""}>{item.label}</span>
    </li>
  );
}

function ScrollArrow({ d }: { d: string }) {
  return (
    <svg width="7" height="7" viewBox="0 0 7 7" className="block shrink-0" aria-hidden="true">
      <path d={d} fill="none" stroke="#333" strokeWidth="1.500" />
    </svg>
  );
}

function ProjectBrowser() {
  return (
    <section className="mt-1 flex min-h-0 flex-1 flex-col">
      <PaletteHeader title="项目浏览器 - 项目1" />
      <div className="flex min-h-0 flex-1 bg-white">
        <ul className="min-w-0 flex-1 overflow-hidden pt-px">
          {treeItems.map((item) => (
            <TreeRow key={item.label} item={item} />
          ))}
        </ul>
        <div className="flex w-[13px] shrink-0 flex-col items-center bg-[#f0f0f0] py-1">
          <ScrollArrow d="M.5 5l3-3 3 3" />
          <div className="mt-0.5 h-[71px] w-3 bg-[#c9c9c9]" />
          <div className="flex-1" />
          <ScrollArrow d="M.5 2l3 3 3-3" />
        </div>
      </div>
    </section>
  );
}

/* ---------- Drawing area ---------- */

const columns = [319, 329, 379, 389, 427, 437, 487, 496, 535, 545];
const fence = [548, 552, 556, 561, 566, 571, 576, 581, 586, 591, 596, 601];
const mullions = Array.from({ length: 17 }, (_, i) => 612 + i * 5.5);

function Elevation() {
  return (
    <svg
      width="807"
      height="417"
      viewBox="181 133 807 417"
      fill="none"
      stroke="#4a6a94"
      className="block max-w-none"
      role="img"
      aria-label="东立面"
    >
      <path d="M181 448.500h666" stroke="#4b6f9c" />
      {/* left annex and main volume */}
      <path d="M190.500 448v-43H259" />
      <path d="M266.500 373.500l1-13H705.500v13" />
      <path d="M264 423.500l-12-46.500 14.500-3.500h341" />
      <path d="M252 377.500h355.500M263 425.500h344.500M263 428.500h354" />
      <path d="M262.500 418v30M264.500 428v20M267.500 428v20" />
      {columns.map((x) => (
        <path key={x} d={`M${x + 0.5} 428v20`} />
      ))}
      <path d="M487 446.500h10M548 430.500h53" />
      {fence.map((x) => (
        <path key={x} d={`M${x + 0.5} 430v18`} />
      ))}
      {/* chimney */}
      <path d="M546.500 373v-104h9v28l1 1v62l1 1v12" fill="#fefefe" />
      {/* glazed front */}
      <path d="M607.500 373.500v54M607 373.500h98v57M607 385.500h97" />
      <path d="M607 388.500h97M607 389.500h97" stroke="#7288a8" />
      {mullions.map((x, i) => (
        <g key={x}>
          <path d={`M${x} 390v15`} stroke={i % 3 === 0 ? "#1e4f94" : "#47709f"} strokeWidth={i % 2 === 0 ? 3 : 2} />
          <path d={`M${x} 407v16`} stroke="#52759f" strokeWidth="2" />
        </g>
      ))}
      <path d="M642.500 390v33M667.500 390v33M608.500 390v33M703.500 390v37" stroke="#1e4f94" />
      <path d="M607 405.500h97" stroke="#35577f" strokeWidth="2" />
      <path d="M607 423.500h97" />
      <path d="M607 426.500h97" stroke="#1d427d" strokeWidth="2" />
      {/* right wing */}
      <path d="M704 373.500h37v16M704 389.500h37M741.500 373.500l1 12v63M704 401.500h38M704 425.500h38" />
      {/* tree and bench */}
      <ellipse cx="641.500" cy="433" rx="5" ry="8" fill="#fefefe" />
      <path d="M641.500 433v13M635 448v-2M649 448v-2" />
      <path d="M633 445.500h18" stroke="#1d3f70" strokeWidth="1.500" />
      <path d="M664 446.500h23v-16h-4l-3 2v13M683.500 431v15" />
      {/* level lines */}
      <path d="M490 307.500h142M490 331.500h142" stroke="#8b929a" strokeDasharray="12 4 5 4" />
      <path d="M629 307.500h5l2-2h11M629 331.500h5l2-2h11" stroke="#333f4d" />
      <path d="M636 304.500h6M644 304.500h3M636 328.500h6M644 328.500h3" stroke="#333f4d" strokeDasharray="2 1" />
      <path d="M841 479a7 7 0 0 1 13-2M857 477a7 7 0 0 1 13 2" stroke="#d7dce2" />
    </svg>
  );
}

function NavigationBar() {
  return (
    <div className="absolute top-[18px] right-px flex h-[76px] w-[23px] flex-col items-center justify-between rounded-sm border-2 border-[#c9c9c9] bg-[#f3f3f3] py-px">
      <Icon w={17} h={5}><circle cx="14.500" cy="2.500" r="2" stroke="#aaa" /></Icon>
      <ToolButton label="导航控制盘" className="flex-col gap-1">
        <Icon w={17} h={17}>
          <path d="M13 13A6.500 6.500 0 1 1 14 8v3h-3" stroke="#a9adb8" strokeWidth="1.500" />
          <circle cx="7.500" cy="7.500" r="2.800" stroke="#a9adb8" />
          <path d="M9 10.500h3v2.500H9.500v2.500h3M13.500 10.500v5h1c2.500 0 2.500-5 0-5z" stroke="#6d93bd" />
        </Icon>
        <Caret />
      </ToolButton>
      <div className="h-px w-4 bg-[#bbb]" />
      <ToolButton label="缩放" className="flex-col gap-1.5">
        <Icon w={13} h={12}>
          <rect x="1.500" y="1.500" width="7" height="7" fill="#a6cf97" stroke="#8bb37c" />
          <circle cx="8" cy="7" r="2.500" fill="#fff" stroke="#999" />
          <path d="M10 9l2.500 2.500" stroke="#999" />
        </Icon>
        <Caret />
      </ToolButton>
      <Icon w={17} h={5}><circle cx="14.500" cy="2.500" r="2" stroke="#aaa" /></Icon>
    </div>
  );
}

function ViewControlBar() {
  return (
    <div className="flex h-[15px] shrink-0 items-center bg-[#efefef]">
      <button
        type="button"
        className="ml-4 w-10 shrink-0 text-left font-[family-name:'DejaVu_Sans',sans-serif] text-[10px] leading-[14px] whitespace-nowrap text-[#222]"
      >
        1 : 100
      </button>
      <div className="ml-3.5 flex shrink-0 gap-[7px]">
        <ToolButton label="详细程度"><Icon w={11} h={11}><path d="M.5 1.500h10v7H.5z" stroke="#555" /></Icon></ToolButton>
        <ToolButton label="视觉样式"><Icon w={11} h={11}><path d="M1.500 4.500l2-3h7v5l-2 3h-7zM1.500 4.500h7v5M8.500 4.500l2-3" stroke="#444" /></Icon></ToolButton>
        <ToolButton label="日光路径"><Icon w={11} h={11}><circle cx="4" cy="4" r="2.500" fill="#ffe58a" stroke="#dba324" /><path d="M5 5l5 5M10 5l-5 5" stroke="#c8352b" strokeWidth="1.500" /></Icon></ToolButton>
        <ToolButton label="阴影"><Icon w={11} h={11}><circle cx="4.500" cy="4" r="3" fill="#d8eaf6" stroke="#4a86b8" /><path d="M1 9.500h4" /><path d="M5.500 5l5 5M10.500 5l-5 5" stroke="#c8352b" strokeWidth="1.500" /></Icon></ToolButton>
        <ToolButton label="裁剪视图"><Icon w={11} h={11}><path d="M0 6.500h4M3.500 1v9M1 3.500h8.500v5" stroke="#33689a" strokeWidth="1.500" /><path d="M5.500 4.500l5 5M10.500 4.500l-5 5" stroke="#c8352b" strokeWidth="1.500" /></Icon></ToolButton>
        <ToolButton label="显示裁剪区域"><Icon w={11} h={11}><path d="M0 6.500h4M3.500 2v7M1 3.500h6v3" stroke="#33689a" strokeWidth="1.500" /><circle cx="8" cy="6" r="2" fill="#d8eaf6" stroke="#4a86b8" /></Icon></ToolButton>
        <ToolButton label="临时隐藏/隔离"><Icon w={11} h={11}><path d="M.5 2.500l2.500 3h4l3-3M10 2.500v1" stroke="#444" /><circle cx="6.500" cy="6.500" r="2" fill="#fff" stroke="#444" /></Icon></ToolButton>
        <ToolButton label="显示隐藏的图元"><Icon w={11} h={11}><circle cx="5.500" cy="4" r="2" fill="#cfe8fa" stroke="#4a8fc6" /><path d="M5.500 6.500v3" stroke="#4a8fc6" /></Icon></ToolButton>
        <ToolButton label="临时视图属性"><Icon w={11} h={11}><path d="M1.500 2.500h8v6h-8z" stroke="#333" /><path d="M5 5.500l4 4M9 5l-4 1.500" stroke="#333" /></Icon></ToolButton>
        <ToolButton label="显示约束"><Icon w={11} h={11}><path d="M1 3.500h6v5H1z" fill="#c98c86" stroke="#84504c" /><path d="M4 4.500l2-3h4v5l-2 2" fill="#f3d9a0" stroke="#9a7b3b" /></Icon></ToolButton>
        <ToolButton label="收起"><ScrollArrow d="M5 .5l-3 3 3 3" /></ToolButton>
      </div>
      <div className="ml-5 flex h-full min-w-0 flex-1 items-center justify-end bg-[#efefef] pr-1">
        <div className="mr-[261px] h-[13px] w-3.5 shrink-0 bg-[#c8c8c8]" />
        <ScrollArrow d="M2 .5l3 3-3 3" />
      </div>
      <div className="w-3 shrink-0" />
    </div>
  );
}

function DrawingView() {
  return (
    <main className="ml-[3px] flex min-w-0 flex-1 flex-col border-l-2 border-[#8b8b8b] bg-[#fefefe]">
      <div className="flex min-h-0 flex-1">
        <div className="relative min-w-0 flex-1 overflow-hidden">
          <Elevation />
          <div className="absolute top-[5px] right-[3px] flex gap-1">
            <ToolButton label="最小化视图"><Icon w={9} h={9}><path d="M.5 4.500h8v2h-8z" stroke="#444" /></Icon></ToolButton>
            <ToolButton label="还原视图"><Icon w={8} h={9}><path d="M2.500 2.500v-2h5v5h-2M.5 2.500h5v5h-5z" stroke="#444" /></Icon></ToolButton>
            <ToolButton label="关闭视图"><Icon w={8} h={9}><path d="M.5 .5h2l1.500 2 1.500-2h2L5.500 4l2 3.500h-2L4 5.500l-1.500 2h-2L2.500 4z" stroke="#444" /></Icon></ToolButton>
          </div>
          <NavigationBar />
        </div>
        <div className="flex w-3 shrink-0 flex-col items-center bg-[#efefef] py-1">
          <ScrollArrow d="M.5 5l3-3 3 3" />
          <div className="flex-1" />
          <div className="h-3.5 w-3 shrink-0 bg-[#c8c8c8]" />
          <div className="flex-1" />
          <ScrollArrow d="M.5 2l3 3 3-3" />
        </div>
      </div>
      <ViewControlBar />
    </main>
  );
}

/* ---------- Status bar ---------- */

function StatusSelect({ label, value, className }: { label: string; value: string; className: string }) {
  return (
    <div className={`relative shrink-0 ${className}`}>
      <select aria-label={label} className="block h-4 w-full appearance-none bg-white pl-0.5 text-[10px] leading-4 text-[#888]">
        <option>{value}</option>
      </select>
      <svg width="7" height="4" viewBox="0 0 7 4" className="pointer-events-none absolute top-1.5 right-0.5" aria-hidden="true">
        <path d="M.5.500l3 3 3-3" fill="none" stroke="#aaa" />
      </svg>
    </div>
  );
}

function StatusBar() {
  return (
    <footer className="flex h-[14px] shrink-0 items-start overflow-hidden border-t-2 border-[#a5a5a5] bg-linear-to-b from-[#e6e6e6] to-[#c4c4c4] text-[10px] leading-[14px] text-[#222]">
      <p className="w-[380px] shrink-0 overflow-hidden whitespace-nowrap">
        单击可进行选择; 按 Tab 键并单击可选择其他项目; 按 Ctrl 键并单击可将新项目添加到选择集
      </p>
      <span className="w-[19px] shrink-0 pt-0.5 pl-1">
        <Icon w={12} h={11}>
          <path d="M1.500 5.500h4v5h-4z" fill="#d6eaf7" stroke="#39739f" />
          <circle cx="6" cy="3" r="2" stroke="#3d8b5a" />
          <circle cx="9" cy="8" r="2.500" stroke="#39739f" />
        </Icon>
      </span>
      <StatusSelect label="工作集" value="" className="w-[133px]" />
      <span className="ml-1 flex w-[37px] shrink-0 gap-1">
        <Icon w={12} h={12}>
          <path d="M2 11l6-6M5.500 3.500l3-2 2 2-2 3z" fill="#ccc" stroke="#999" strokeWidth="1.500" />
        </Icon>
        :0
      </span>
      <Icon w={12} h={12}>
        <path d="M1.500 1.500h10v10h-10z" fill="#f5f5f5" stroke="#333" />
        <path d="M1 3h11M3 6.500h2M6.500 6.500h4M3 9.500h2M6.500 9.500h4" stroke="#333" />
      </Icon>
      <span className="ml-[5px]">
        <Icon w={12} h={12}>
          <path d="M2 3h8v7H6V7H2z" fill="#a3a3a3" stroke="#8e8e8e" />
        </Icon>
      </span>
      <span className="w-[3px] shrink-0" />
      <StatusSelect label="设计选项" value="主模型" className="w-[101px]" />
      <div className="flex flex-1 justify-end gap-1.5 pr-[61px]">
        <Icon w={11} h={11}><path d="M.5 1.500h10M2 3.500h7" stroke="#d3a43a" strokeWidth="2" /><path d="M4 4v6l2-1.500 2 2.500 1-1-1.500-2.500H9.500z" fill="#fff" /></Icon>
        <Icon w={11} h={11}><path d="M1 5l4-3.500h5M1 5h7M3 8.500h6" stroke="#39739f" /><path d="M6 3v6l4-2z" fill="#fff" /></Icon>
        <Icon w={11} h={11}><path d="M1.500 1.500h6v5h-6zM4.500 6v4" fill="#e7a17a" stroke="#b55a33" /><path d="M6 4v6l4-2z" fill="#fff" /></Icon>
        <Icon w={11} h={11}><path d="M1.500 1.500h6v8h-6z" stroke="#3b6fa5" /><path d="M6 0l4 4M10 0L6 4" stroke="#cf2a22" strokeWidth="1.500" /><path d="M5 5v5l3-2z" fill="#fff" /></Icon>
        <Icon w={11} h={11}><path d="M0 3.500h7M3.500 0v7" stroke="#222" strokeWidth="1.500" /><path d="M6 4v6l4-2z" fill="#fff" /></Icon>
        <span className="flex">
          <Icon w={11} h={11}><path d="M.5 1.500h10l-4 4.500v5h-2V6z" fill="#eee" stroke="#555" /></Icon>
          :1
        </span>
      </div>
    </footer>
  );
}

/* ---------- Overlays ---------- */

function Annotations() {
  return (
    <svg
      width="1000"
      height="579"
      viewBox="0 0 1000 579"
      className="pointer-events-none absolute top-0 left-0"
      aria-hidden="true"
    >
      <rect x="202.500" y="246.500" width="682" height="234" fill="none" stroke="#d01813" strokeWidth="4" />
      <path d="M400 193.500L298 60" stroke="#cc1a14" strokeWidth="2.500" />
      <path d="M291 51l15 9.500-9 6.500z" fill="#ee1c12" />
    </svg>
  );
}

function Watermark() {
  return (
    <div className="absolute right-[55px] bottom-[15px] flex h-[85px] w-[180px] items-center bg-[#212f58] pl-[14px] text-[#c9cedd]">
      <svg width="36" height="38" viewBox="0 0 36 38" fill="none" stroke="#c9cedd" aria-hidden="true">
        <path d="M8.500 31V5.500C8.500 2 11 1.500 14 3l16 9.500c4 2.500 4 8 0 10.500L14.500 34C8 38 2 35.500 2 29V8" strokeWidth="2.800" strokeLinecap="round" />
        <path d="M8.500 7v19c0 3 2.500 4 5 2.500" strokeWidth="2.500" />
        <path d="M14 13v11l8-5.500z" fill="#c9cedd" stroke="none" />
        <path d="M24 14.500v8" strokeWidth="1.800" />
      </svg>
      <div className="ml-3 flex flex-col">
        <strong className="text-[26px] leading-7 font-bold whitespace-nowrap">溜溜自学</strong>
        <span className="font-[family-name:'DejaVu_Sans',sans-serif] text-[12px] leading-4 whitespace-nowrap">
          zixue.3D66.COM
        </span>
      </div>
    </div>
  );
}

function ApplicationButton() {
  return (
    <button
      type="button"
      aria-label="应用程序菜单"
      className="absolute top-0 left-0 flex h-[26px] w-[25px] items-center justify-center gap-px border-r border-b border-[#777] bg-[#b5b5b5]"
    >
      <svg width="15" height="19" viewBox="0 0 15 19" aria-hidden="true">
        <path d="M1 3l3-2h6c4 0 5 7 1 9l3 7-4 1-3-7H6v6l-4 1.500z" fill="#1f58b5" />
        <path d="M6 4h3c2 0 2 4 0 4H6z" fill="#b5cdf0" />
        <path d="M1 3l3 1v13l-2 1.500z" fill="#123a86" />
      </svg>
      <Caret />
    </button>
  );
}

export default function App() {
  return (
    <div className="relative flex h-screen flex-col overflow-hidden bg-[#f0f0f0] font-[family-name:'Open_Sans','Noto_Sans_CJK_SC',sans-serif]">
      <TitleBar />
      <TabBar />
      <Ribbon />
      <div className="h-[21px] shrink-0 border-b border-[#7d8a76] bg-[#d5e0cd] pl-[5px] text-[10px] leading-[23px] text-[#a3aa9e]">
        修改 | SU模型.dwg
      </div>
      <div className="flex min-h-0 flex-1">
        <aside className="flex w-44 shrink-0 flex-col">
          <PropertiesPalette />
          <ProjectBrowser />
        </aside>
        <DrawingView />
      </div>
      <StatusBar />
      <ApplicationButton />
      <Annotations />
      <Watermark />
    </div>
  );
}
